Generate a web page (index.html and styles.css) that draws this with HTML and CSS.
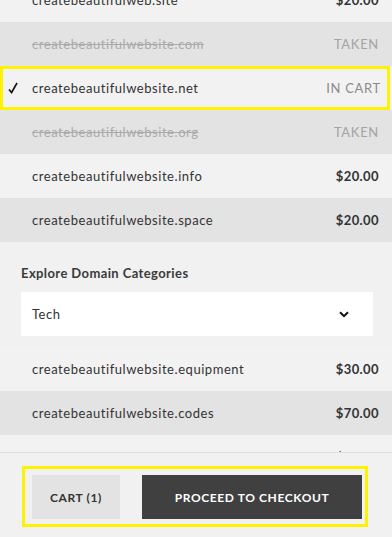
FILE: index.html
```html
<!DOCTYPE html>
<html lang="en">
<head>
    <meta charset="UTF-8">
    <meta name="viewport" content="width=device-width, initial-scale=1.0">
    <title>Domain Search</title>
    <link rel="stylesheet" href="styles.css">
</head>
<body>
    <div class="results">
        <div class="row">
            <span class="name">createbeautifulweb.site</span>
            <span class="price">$20.00</span>
        </div>
        <div class="row alt taken">
            <span class="name">createbeautifulwebsite.com</span>
            <span class="status">TAKEN</span>
        </div>
        <div class="row in-cart marked">
            <svg class="check" width="10" height="12" viewBox="0 0 10 12"><path d="M1 7.5 L3.6 10.5 L9 1" fill="none" stroke="#111" stroke-width="1.6"/></svg>
            <span class="name">createbeautifulwebsite.net</span>
            <span class="status">IN CART</span>
        </div>
        <div class="row alt taken">
            <span class="name">createbeautifulwebsite.org</span>
            <span class="status">TAKEN</span>
        </div>
        <div class="row">
            <span class="name">createbeautifulwebsite.info</span>
            <span class="price">$20.00</span>
        </div>
        <div class="row alt">
            <span class="name">createbeautifulwebsite.space</span>
            <span class="price">$20.00</span>
        </div>

        <div class="categories">
            <div class="categories-title">Explore Domain Categories</div>
            <div class="select">
                <span>Tech</span>
                <svg width="10" height="7" viewBox="0 0 10 7"><path d="M1 1.2 L5 5.2 L9 1.2" fill="none" stroke="#111" stroke-width="2"/></svg>
            </div>
        </div>

        <div class="row">
            <span class="name">createbeautifulwebsite.equipment</span>
            <span class="price">$30.00</span>
        </div>
        <div class="row alt">
            <span class="name">createbeautifulwebsite.codes</span>
            <span class="price">$70.00</span>
        </div>
        <div class="row">
            <span class="name">createbeautifulwebsite.software</span>
            <span class="price">$50.00</span>
        </div>
    </div>

    <div class="footer">
        <div class="actions marked">
            <button class="btn btn-cart">CART (1)</button>
            <button class="btn btn-checkout">PROCEED TO CHECKOUT</button>
        </div>
    </div>
</body>
</html>
```

FILE: styles.css
```css
body {
    margin: 0;
    height: 537px;
    overflow: hidden;
    position: relative;
    background-color: #f1f1f1;
    color: #333;
    font-family: Lato, sans-serif;
    font-size: 13px;
}
.results {
    margin-top: -22px;
}
.row {
    position: relative;
    display: flex;
    align-items: center;
    justify-content: space-between;
    height: 44px;
    padding: 0 13px 0 32px;
    background-color: #f2f2f2;
    letter-spacing: 0.55px;
}
.row.alt {
    background-color: #e3e3e3;
}
.row.taken .name {
    color: #aaa;
    text-decoration: line-through;
}
.status {
    color: #a3a3a3;
    letter-spacing: 0.7px;
}
.in-cart .status {
    color: #8a8a8a;
    margin-right: -4px;
}
.price {
    font-weight: 700;
    letter-spacing: 0.4px;
}
.check {
    position: absolute;
    left: 8px;
    top: 16px;
}
.marked {
    outline: 3px solid #fff200;
    outline-offset: -3px;
}
.row.marked {
    margin-right: 2px;
}
.categories {
    padding: 23px 19px 11px 21px;
}
.categories-title {
    font-weight: 700;
    color: #3a3a3a;
    letter-spacing: 0.4px;
    margin-bottom: 11px;
}
.select {
    display: flex;
    align-items: center;
    justify-content: space-between;
    height: 44px;
    padding: 0 24px 0 11px;
    background-color: #fff;
    letter-spacing: 0.5px;
}
.footer {
    position: absolute;
    left: 0;
    right: 0;
    bottom: 0;
    height: 85px;
    box-sizing: border-box;
    background-color: #f1f1f1;
    border-top: 1px solid #e0e0e0;
    padding: 13px 24px 0 22px;
}
.actions {
    display: flex;
    gap: 22px;
    padding: 9px 6px 8px 10px;
}
.btn {
    height: 44px;
    border: 0;
    font-family: Lato, sans-serif;
    font-size: 12px;
    letter-spacing: 0.6px;
    cursor: pointer;
}
.btn-cart {
    width: 88px;
    background-color: #e3e3e3;
    color: #333;
    font-weight: 700;
}
.btn-checkout {
    flex: 1;
    background-color: #404040;
    color: #fff;
    font-weight: 700;
}
```
